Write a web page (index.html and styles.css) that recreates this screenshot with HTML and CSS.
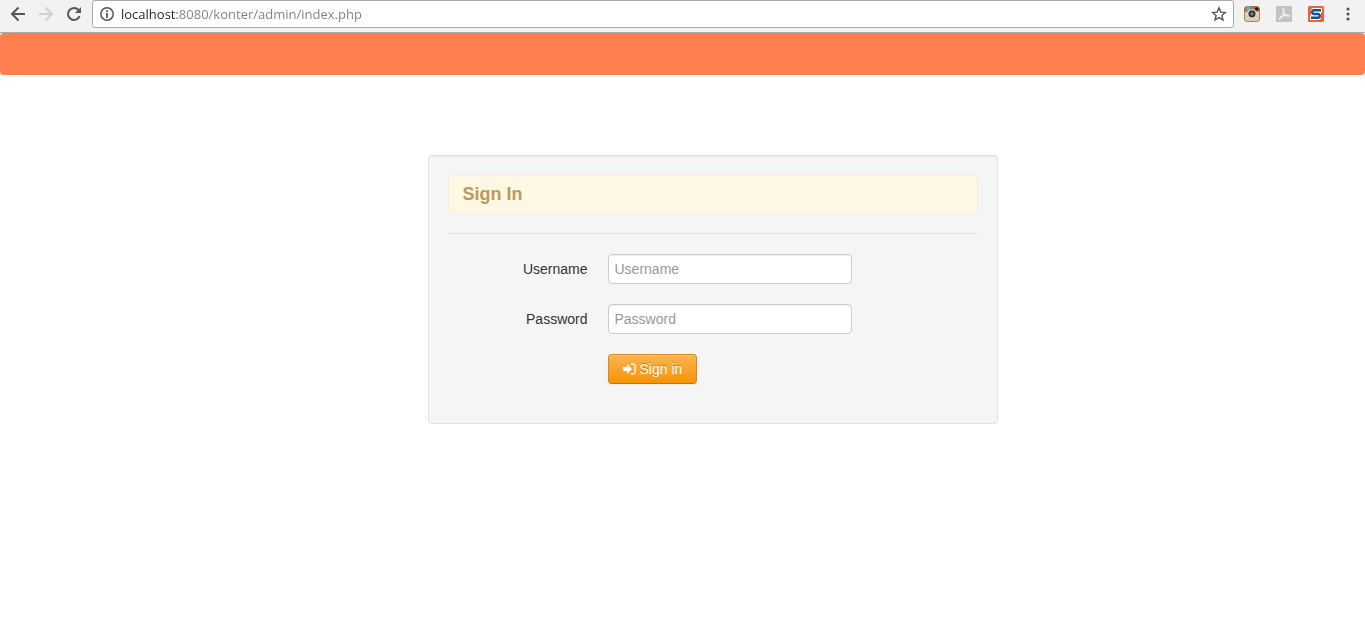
FILE: index.html
```html
<!DOCTYPE html>
<html lang="en">
<head>
  <meta charset="UTF-8">
  <meta name="viewport" content="width=device-width, initial-scale=1.0">
  <title>Sign In</title>
  <link rel="stylesheet" href="styles.css">
</head>
<body>
  <div class="toolbar">
    <div class="toolbar-nav">
      <button type="button" class="tool-btn" aria-label="Back">
        <svg width="16" height="16" viewBox="0 0 16 16" fill="none" stroke="#555" stroke-width="2"><path d="M15 8H2M8.500 1.500L2 8l6.500 6.500"/></svg>
      </button>
      <button type="button" class="tool-btn" aria-label="Forward" disabled>
        <svg width="16" height="16" viewBox="0 0 16 16" fill="none" stroke="#d0d0d0" stroke-width="2"><path d="M1 8h13M7.500 1.500L14 8l-6.500 6.500"/></svg>
      </button>
      <button type="button" class="tool-btn" aria-label="Reload">
        <svg width="16" height="16" viewBox="0 0 16 16"><path d="M13.600 10.200A6 6 0 1 1 12.500 4" fill="none" stroke="#555" stroke-width="2"/><path d="M15 1v6H9z" fill="#555"/></svg>
      </button>
    </div>
    <div class="address-bar">
      <svg width="14" height="14" viewBox="0 0 14 14"><circle cx="7" cy="7" r="6.200" fill="none" stroke="#555" stroke-width="1.500"/><path d="M6.100 3.200h1.800v1.700H6.100zM6.100 6h1.800v5H6.100z" fill="#555"/></svg>
      <input type="text" class="address-input" aria-label="Address" value="localhost:8080/konter/admin/index.php">
      <button type="button" class="tool-btn" aria-label="Bookmark this page">
        <svg width="16" height="16" viewBox="0 0 16 16"><path d="M8 1.800l1.800 4.300 4.600.4-3.500 3 1.100 4.600L8 11.600l-4 2.500 1.100-4.600-3.500-3 4.600-.4z" fill="none" stroke="#555" stroke-width="1.400"/></svg>
      </button>
    </div>
    <div class="toolbar-extensions">
      <button type="button" class="tool-btn" aria-label="Camera">
        <svg width="16" height="16" viewBox="0 0 16 16">
          <rect x=".5" y=".5" width="15" height="15" rx="2.500" fill="#dfcdb2" stroke="#a58467"/>
          <path d="M.5 5.500V3A2.500 2.500 0 0 1 3 .5h10A2.500 2.500 0 0 1 15.500 3v2.500z" fill="#a5704f"/>
          <path d="M1 5.500V2l1.500-1v4.500z" fill="#e8503a"/><path d="M2.500.5H4v5H2.500z" fill="#35c4cf"/><path d="M4 .5h2v5H4z" fill="#4fbfc0"/>
          <rect x="11" y="1.500" width="3.500" height="3" rx="1" fill="#35150f"/>
          <circle cx="8" cy="7.800" r="4.600" fill="#f1e9da"/><circle cx="8" cy="7.800" r="3.600" fill="#333"/><circle cx="8" cy="7.800" r="1.600" fill="#7b8c91"/>
        </svg>
      </button>
      <button type="button" class="tool-btn" aria-label="PDF">
        <svg width="16" height="16" viewBox="0 0 16 16"><path d="M0 0h16v16H0z" fill="#c3c3c3"/><path d="M7.300 2.500c.8 2.200.6 4.300-.3 6.200-.9 1.900-2.200 3.600-3.800 4.300M7.600 6.800c1 1.700 3 3 5.400 3.200M4.800 10.600c2-.9 5.500-1.500 8.200-1.200" fill="none" stroke="#f3f3f3" stroke-width="1.500" stroke-linecap="round"/><path d="M6.800 8.300l1.400.4-1.700.8z" fill="#c3c3c3"/></svg>
      </button>
      <button type="button" class="tool-btn" aria-label="S extension">
        <svg width="16" height="16" viewBox="0 0 16 16"><rect width="16" height="16" rx="1.500" fill="#ee6230"/><path d="M4.500 2h9.500v4.500h-1v6L11.500 14H2V9.500h1v-6z" fill="#fff"/><path d="M13 4.200H5.500L4.300 5.200v1.600L5.500 8h5l1.200 1.200v1.600l-1.200 1H3" fill="none" stroke="#164f88" stroke-width="2.400"/></svg>
      </button>
      <button type="button" class="tool-btn" aria-label="Menu">
        <svg width="16" height="16" viewBox="0 0 16 16" fill="#555"><circle cx="8" cy="3" r="1.600"/><circle cx="8" cy="8" r="1.600"/><circle cx="8" cy="13" r="1.600"/></svg>
      </button>
    </div>
  </div>

  <div class="navbar"></div>

  <div class="container">
    <div class="well">
      <div class="alert">Sign In</div>
      <hr>
      <form class="form-horizontal">
        <div class="control-group">
          <label class="control-label" for="username">Username</label>
          <input type="text" id="username" placeholder="Username">
        </div>
        <div class="control-group">
          <label class="control-label" for="password">Password</label>
          <input type="password" id="password" placeholder="Password">
        </div>
        <div class="control-group control-actions">
          <button type="submit" class="btn-warning">
            <svg width="13" height="12" viewBox="0 0 13 12"><path d="M0 4h4V1l5 5-5 5V8H0z" fill="#fff"/><path d="M8 1h2.500A1.500 1.500 0 0 1 12 2.500v7a1.500 1.500 0 0 1-1.500 1.500H8" fill="none" stroke="#fff" stroke-width="1.300"/></svg>
            Sign in
          </button>
        </div>
      </form>
    </div>
  </div>
</body>
</html>
```
FILE: styles.css
```css
* {
  box-sizing: border-box;
}

body {
  margin: 0;
  background: #fff;
  color: #333;
  font-family: "Liberation Sans", Arial, sans-serif;
  font-size: 14px;
  line-height: 20px;
}

/* Browser toolbar */
.toolbar {
  display: flex;
  align-items: flex-start;
  height: 33px;
  background: #f2f2f2;
  border-bottom: 1px solid #aaa;
}

.toolbar-nav,
.toolbar-extensions {
  display: flex;
  align-items: center;
  height: 28px;
}

.toolbar-nav {
  gap: 12px;
  padding: 0 10px;
}

.toolbar-extensions {
  gap: 16px;
  padding: 0 9px 0 10px;
}

.tool-btn {
  display: flex;
  padding: 0;
  border: none;
  background: none;
}

.address-bar {
  flex: 1;
  display: flex;
  align-items: center;
  height: 28px;
  padding: 0 6px 0 7px;
  background: #fff;
  border: 1px solid #aaa;
  border-radius: 3px;
}

/* host part is dark, the rest of the address is grey */
.address-input {
  flex: 1;
  min-width: 0;
  height: 24px;
  padding: 0;
  margin-left: 7px;
  border: none;
  outline: none;
  background: linear-gradient(to right, #222 56px, #808080 56px);
  -webkit-background-clip: text;
  background-clip: text;
  color: transparent;
  font-family: "Open Sans", "Segoe UI", sans-serif;
  font-size: 13px;
}

.navbar {
  height: 42px;
  background: #ff7f50;
  border-radius: 4px;
}

/* Sign in box */
.container {
  max-width: 1170px;
  margin: 80px auto 0;
}

.well {
  max-width: 570px;
  margin-left: 330px;
  padding: 19px;
  background: #f5f5f5;
  border: 1px solid #e3e3e3;
  border-radius: 4px;
  box-shadow: inset 0 1px 1px rgba(0, 0, 0, 0.05);
}

.alert {
  padding: 8px 14px;
  background: #fcf8e3;
  border: 1px solid #fbeed5;
  border-radius: 4px;
  color: #c09853;
  font-size: 18px;
  font-weight: bold;
  text-shadow: 0 1px 0 rgba(255, 255, 255, 0.5);
}

hr {
  margin: 20px 0;
  border: 0;
  border-top: 1px solid #e2e2e2;
}

.control-group {
  display: flex;
  gap: 20px;
  margin-bottom: 20px;
}

.control-label {
  width: 140px;
  padding-top: 5px;
  text-align: right;
}

.control-group input {
  width: 244px;
  height: 30px;
  padding: 4px 6px;
  background: #fff;
  border: 1px solid #ccc;
  border-radius: 4px;
  box-shadow: inset 0 1px 1px rgba(0, 0, 0, 0.075);
  color: #555;
  font-family: inherit;
  font-size: 14px;
}

.control-group input::placeholder {
  color: #999;
}

.control-actions {
  padding-left: 160px;
}

.btn-warning {
  display: flex;
  align-items: center;
  gap: 4px;
  height: 30px;
  padding: 4px 14px;
  background: linear-gradient(to bottom, #fbb450, #f89406);
  border: 1px solid #d98a1c;
  border-bottom-color: #b9781f;
  border-radius: 4px;
  box-shadow: inset 0 1px 0 rgba(255, 255, 255, 0.2), 0 1px 2px rgba(0, 0, 0, 0.05);
  color: #fff;
  font-family: inherit;
  font-size: 14px;
  line-height: 20px;
  text-shadow: 0 -1px 0 rgba(0, 0, 0, 0.25);
  cursor: pointer;
}

@media (max-width: 979px) {
  .container {
    padding: 0 20px;
  }

  .well {
    margin: 0 auto;
  }
}
```
